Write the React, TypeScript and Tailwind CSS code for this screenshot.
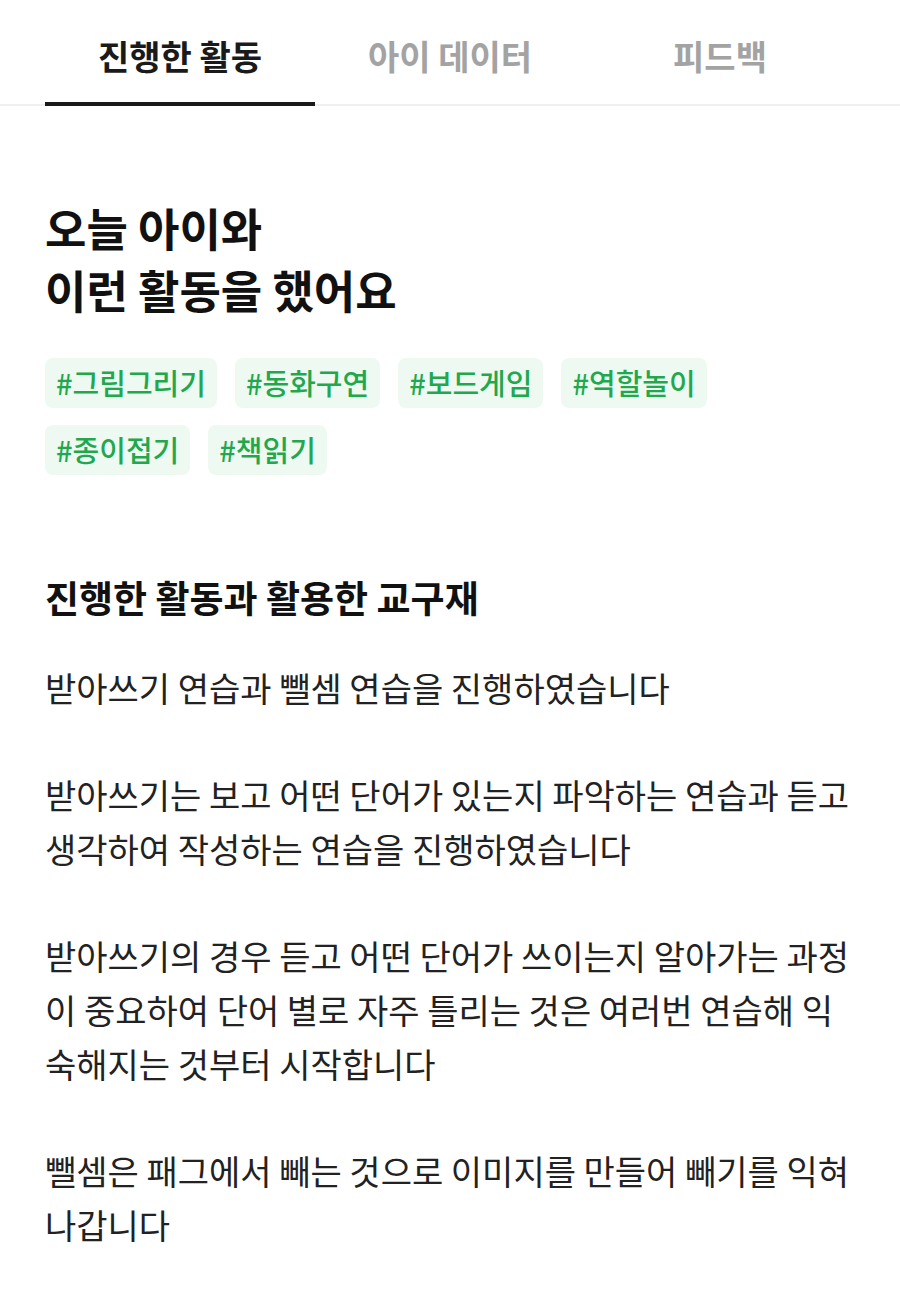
const tabs = ["진행한 활동", "아이 데이터", "피드백"];
const tags = ["#그림그리기", "#동화구연", "#보드게임", "#역할놀이", "#종이접기", "#책읽기"];

const paragraphs = [
  "받아쓰기 연습과 뺄셈 연습을 진행하였습니다",
  "받아쓰기는 보고 어떤 단어가 있는지 파악하는 연습과 듣고 생각하여 작성하는 연습을 진행하였습니다",
  "받아쓰기의 경우 듣고 어떤 단어가 쓰이는지 알아가는 과정이 중요하여 단어 별로 자주 틀리는 것은 여러번 연습해 익숙해지는 것부터 시작합니다",
  "뺄셈은 패그에서 빼는 것으로 이미지를 만들어 빼기를 익혀 나갑니다",
];

export default function App() {
  return (
    <div
      className="min-h-[1295px] bg-white text-[#222]"
      style={{ fontFamily: '"Noto Sans CJK KR", "Noto Sans", sans-serif' }}
    >
      {/* Tabs */}
      <div className="border-b-2 border-[#f0f0f0]">
        <div className="mx-[45px] grid grid-cols-3">
          {tabs.map((t, i) => (
            <div
              key={t}
              className={
                "-mb-[2px] flex h-[106px] items-center justify-center border-b-4 pt-[8px] text-[34px] font-bold " +
                (i === 0 ? "border-[#1a1a1a] text-[#1a1a1a]" : "border-transparent text-[#a3a3a3]")
              }
            >
              {t}
            </div>
          ))}
        </div>
      </div>

      <div className="px-[45px]">
        <h1 className="mt-[91px] text-[45px] font-bold leading-[62px] text-[#111]">
          오늘 아이와
          <br />
          이런 활동을 했어요
        </h1>

        <div className="mt-[37px] flex flex-wrap gap-x-[18px] gap-y-[17px]">
          {tags.map((t) => (
            <span
              key={t}
              className="flex h-[50px] items-center rounded-[8px] bg-[#eefaf1] px-[11px] text-[29px] font-medium text-[#1fa84e]"
            >
              {t}
            </span>
          ))}
        </div>

        <h2 className="mt-[96px] text-[37px] font-bold leading-[52px] text-[#111]">
          진행한 활동과 활용한 교구재
        </h2>

        <div className="mt-[38px] flex flex-col gap-[53px] break-all text-[34px] leading-[54px] text-[#222]">
          {paragraphs.map((p) => (
            <p key={p}>{p}</p>
          ))}
        </div>
      </div>
    </div>
  );
}
